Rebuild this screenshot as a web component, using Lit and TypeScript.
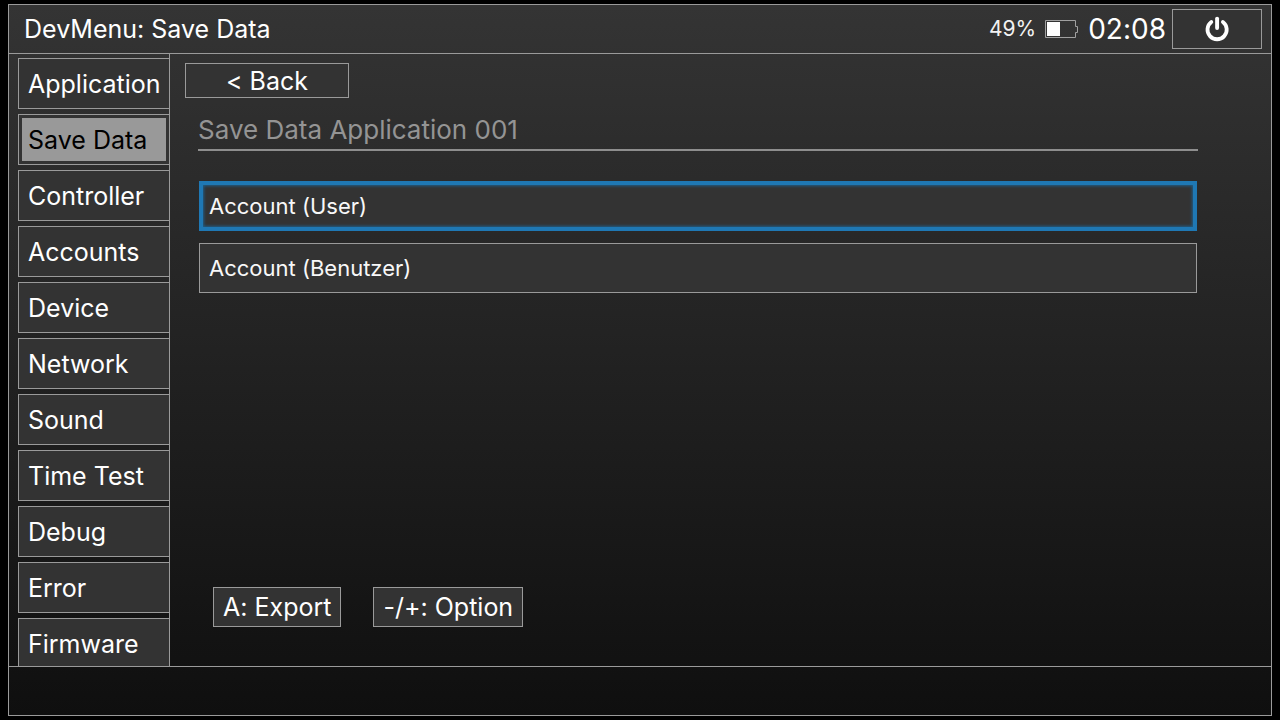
import { LitElement, html, css } from "lit";
import { customElement, property, state } from "lit/decorators.js";
import { classMap } from "lit/directives/class-map.js";

@customElement("battery-meter")
class BatteryMeter extends LitElement {
  @property({ type: Number }) level = 0;

  static styles = css`
    :host {
      display: flex;
      align-items: center;
      gap: 9px;
      color: #f2f2f2;
      font-size: 21px;
    }
    svg {
      display: block;
      width: 33px;
      height: 18px;
    }
  `;

  render() {
    return html`
      <span>${this.level}%</span>
      <svg viewBox="0 0 33 18" aria-hidden="true">
        <path d="M.5 .5H30.5V6.5H32.5V12.5H30.5V17.5H.5Z" fill="none" stroke="#a0a0a0" />
        <rect x="2" y="2" width=${Math.round((this.level / 100) * 27)} height="14" fill="#fff" />
      </svg>
    `;
  }
}

@customElement("app-root")
class AppRoot extends LitElement {
  @state() private page = "Save Data";
  @state() private account = "Account (User)";

  private pages = [
    "Application",
    "Save Data",
    "Controller",
    "Accounts",
    "Device",
    "Network",
    "Sound",
    "Time Test",
    "Debug",
    "Error",
    "Firmware",
  ];
  private accounts = ["Account (User)", "Account (Benutzer)"];

  static styles = css`
    :host {
      --line: #9a9a9a;
      --face: #333;
      display: block;
      box-sizing: border-box;
      height: 100vh;
      padding: 4px 8px;
      background: #000;
      color: #fff;
      font-family: Inter, "Noto Sans", sans-serif;
      font-size: 25px;
      font-variant-ligatures: no-contextual;
      line-height: 32px;
    }
    * {
      box-sizing: border-box;
    }
    button {
      margin: 0;
      padding: 0 9px;
      border: 1px solid var(--line);
      border-radius: 0;
      background: var(--face);
      color: inherit;
      font: inherit;
      font-variant-ligatures: inherit;
      white-space: nowrap;
      cursor: pointer;
    }
    button:focus {
      outline: none;
    }
    .frame {
      display: flex;
      flex-direction: column;
      height: 100%;
      border: 1px solid var(--line);
      background: linear-gradient(#343434, #0f0f0f);
    }
    .header {
      display: flex;
      align-items: center;
      padding: 4px 9px 4px 15px;
      border-bottom: 1px solid var(--line);
    }
    .title {
      flex: 1;
      margin: 0;
      font-size: 25px;
      font-weight: 400;
      line-height: 34px;
    }
    .clock {
      margin: 0 6px 0 10px;
      font-size: 28px;
      line-height: 34px;
    }
    .power {
      display: grid;
      place-items: center;
      width: 90px;
      height: 40px;
    }
    .power svg {
      width: 26px;
      height: 26px;
    }
    .body {
      display: flex;
      flex: 1;
      min-height: 0;
    }
    .tabs {
      display: flex;
      flex-direction: column;
      gap: 5px;
      flex: none;
      width: 161px;
      padding: 4px 0 0 9px;
      border-right: 1px solid var(--line);
      overflow: hidden;
    }
    .tab {
      flex: none;
      height: 51px;
      border-right: 0;
      text-align: left;
    }
    .tab.current {
      background: #999;
      box-shadow: inset 0 0 0 3px var(--face);
      color: #000;
    }
    .content {
      display: flex;
      flex-direction: column;
      flex: 1;
      min-width: 0;
      padding: 9px 73px 39px 15px;
    }
    .back {
      align-self: flex-start;
      width: 164px;
      height: 35px;
    }
    .heading {
      margin: 14px 0 0 13px;
      padding: 0 0 2px;
      border-bottom: 2px solid #8e8e8e;
      color: #949494;
      font-size: 26px;
      font-weight: 400;
      line-height: 35px;
    }
    .accounts {
      display: flex;
      flex-direction: column;
      flex: 1;
      gap: 12px;
      margin: 0;
      padding: 30px 1px 0 14px;
      list-style: none;
    }
    .account {
      display: block;
      width: 100%;
      height: 50px;
      color: #f8f8f8;
      font-size: 22px;
      text-align: left;
    }
    .account.focused {
      border: 4px solid #1f78b4;
      padding: 0 6px;
      box-shadow: inset 0 0 3px 1px #1f5f8a;
    }
    .actions {
      display: flex;
      gap: 32px;
      padding-left: 28px;
    }
    .action {
      height: 40px;
    }
    .footer {
      height: 49px;
      border-top: 1px solid var(--line);
    }
  `;

  render() {
    return html`
      <div class="frame">
        <header class="header">
          <h1 class="title">DevMenu: ${this.page}</h1>
          <battery-meter .level=${49}></battery-meter>
          <time class="clock">02:08</time>
          <button class="power" aria-label="Power">
            <svg viewBox="0 0 26 26" fill="none" stroke="#fff" aria-hidden="true">
              <path d="M7.3 6A9.6 9.6 0 1 0 18.9 6" stroke-width="3.8" stroke-linecap="round" />
              <path d="M13.1 2.6V12" stroke-width="3.9" stroke-linecap="round" />
            </svg>
          </button>
        </header>
        <div class="body">
          <nav class="tabs">
            ${this.pages.map(
              (name) => html`<button
                class=${classMap({ tab: true, current: name === this.page })}
                @click=${() => (this.page = name)}
              >${name}</button>`
            )}
          </nav>
          <main class="content">
            <button class="back">&lt; Back</button>
            <h2 class="heading">Save Data Application 001</h2>
            <ul class="accounts">
              ${this.accounts.map(
                (name) => html`<li>
                  <button
                    class=${classMap({ account: true, focused: name === this.account })}
                    @click=${() => (this.account = name)}
                  >${name}</button>
                </li>`
              )}
            </ul>
            <div class="actions">
              <button class="action">A: Export</button>
              <button class="action">-/+: Option</button>
            </div>
          </main>
        </div>
        <footer class="footer"></footer>
      </div>
    `;
  }
}
